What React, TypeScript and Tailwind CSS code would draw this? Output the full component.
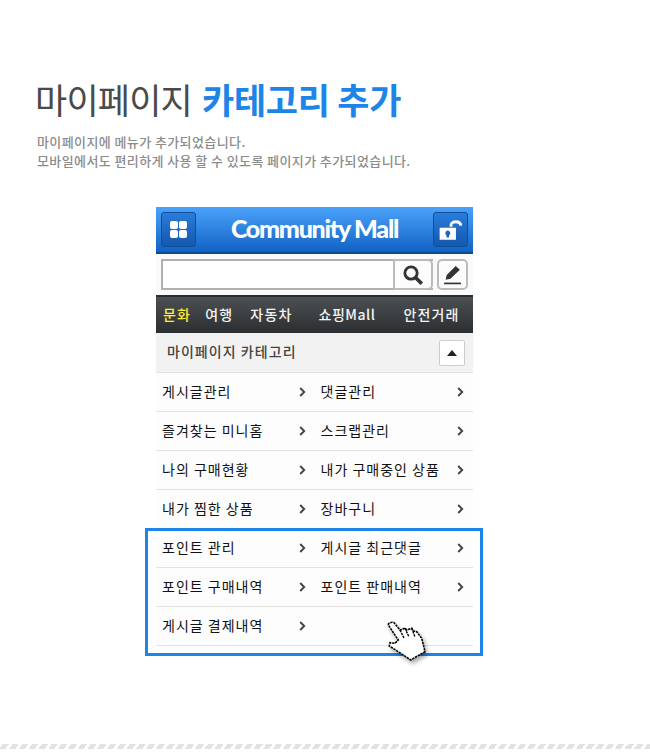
const KR = "font-['Noto_Sans_CJK_KR',sans-serif]";

function Chevron() {
  return (
    <svg width="7" height="10" viewBox="0 0 7 10" className="shrink-0">
      <path d="M1.2 1 L5.2 5 L1.2 9" fill="none" stroke="#444" strokeWidth="1.9" />
    </svg>
  );
}

function Cell({ label }: { label?: string }) {
  return (
    <div className="flex w-[159px] items-center justify-between pr-[9px] pl-[6px]">
      {label ? (
        <>
          <span className="mb-[2px] text-[14px] leading-none tracking-[1px] text-[#111]">{label}</span>
          <Chevron />
        </>
      ) : null}
    </div>
  );
}

const rows: [string, string?][] = [
  ["게시글관리", "댓글관리"],
  ["즐겨찾는 미니홈", "스크랩관리"],
  ["나의 구매현황", "내가 구매중인 상품"],
  ["내가 찜한 상품", "장바구니"],
  ["포인트 관리", "게시글 최근댓글"],
  ["포인트 구매내역", "포인트 판매내역"],
  ["게시글 결제내역"],
];

function Hand() {
  return (
    <svg width="42" height="44" viewBox="0 0 42 44" className="absolute top-[620px] left-[386px] drop-shadow-[2px_3px_2px_rgba(0,0,0,0.35)]">
      <path
        d="M2.3 5 C2 3 6 1.5 8 2.7 L14 10 L19 8.3 L21 10 L25.7 8.3 L27.5 11 L30.7 11.7 L35.7 18.3 L39 31.7 L24.7 40 L12.3 31.7 L3.3 26 L4 22.7 L9 23.3 L12.3 20 Z"
        fill="#fff"
        stroke="#000"
        strokeWidth="1.6"
        strokeDasharray="2.4 0.8"
      />
      <path d="M19 8.3 L23 17 M25.7 8.3 L29 17 M14 10 L18 18" fill="none" stroke="#000" strokeWidth="1.4" strokeDasharray="2.4 0.8" />
    </svg>
  );
}

export default function App() {
  return (
    <div className={`relative h-[752px] w-[650px] overflow-hidden bg-white ${KR}`}>
      <div className="pt-[72px] pl-[37px]">
        <h1 className="-ml-[2px] whitespace-nowrap text-[35px] leading-[54px] tracking-[-0.8px] text-[#4a4a4a] font-normal">
          마이페이지 <span className="ml-[3px] font-bold tracking-[-0.3px] text-[#1e84e8]">카테고리 추가</span>
        </h1>
        <p className="mt-[6px] whitespace-nowrap text-[13px] leading-[19px] font-medium tracking-[0.4px] text-[#8c8c8c]">
          마이페이지에 메뉴가 추가되었습니다.
          <br />
          모바일에서도 편리하게 사용 할 수 있도록 페이지가 추가되었습니다.
        </p>
      </div>

      <div className="mt-[37px] ml-[156px] w-[317px]">
        <header className="flex h-[47px] items-center justify-between border-b-2 border-[#0b4a8f] bg-gradient-to-b from-[#4aa2fb] to-[#0f63c4] px-[5px]">
          <button className="flex h-[35px] w-[35px] items-center justify-center rounded-[3px] border border-[#0f4f99] bg-gradient-to-b from-[#2a7cdc] to-[#1558ab]">
            <span className="grid grid-cols-2 gap-[1px]">
              <i className="h-[8px] w-[8px] rounded-[2px] bg-white" />
              <i className="h-[8px] w-[8px] rounded-[2px] bg-white" />
              <i className="h-[8px] w-[8px] rounded-[2px] bg-white" />
              <i className="h-[8px] w-[8px] rounded-[2px] bg-white" />
            </span>
          </button>
          <span className="mb-[2px] font-['Lato',sans-serif] text-[25px] leading-none font-black tracking-[-1.25px] text-white">Community Mall</span>
          <button className="flex h-[35px] w-[35px] items-center justify-center rounded-[3px] border border-[#0f4f99] bg-gradient-to-b from-[#2a7cdc] to-[#1558ab]">
            <svg width="25" height="24" viewBox="0 0 23 22">
              <path d="M12 8 V6.5 C12 2.5 20.5 2 21 7" fill="none" stroke="#fff" strokeWidth="2.6" />
              <path fillRule="evenodd" fill="#fff" d="M1.5 9 H16.5 V20 H1.5 Z M9 11.5 a2.4 2.4 0 0 0 -1.2 4.4 V18 H10.2 V15.9 A2.4 2.4 0 0 0 9 11.5 Z" />
            </svg>
          </button>
        </header>

        <div className="flex h-[41px] items-center bg-[#fafafa] pr-[5px] pl-[5px]">
          <div className="flex h-[31px] w-[272px] border-2 border-[#b0b0b0] border-r-0 bg-white" />
          <button className="ml-[-40px] flex h-[31px] w-[40px] items-center justify-center rounded-r-[5px] border-2 border-[#bbb] bg-[#fcfcfc]">
            <svg width="22" height="22" viewBox="0 0 20 20">
              <circle cx="8.2" cy="8.2" r="5.6" fill="none" stroke="#333" strokeWidth="2.6" />
              <path d="M12.5 12.5 L18 18" stroke="#333" strokeWidth="3.4" />
            </svg>
          </button>
          <button className="ml-[4px] flex h-[31px] w-[31px] items-center justify-center rounded-[5px] border-2 border-[#bbb] bg-[#fcfcfc]">
            <svg width="19" height="20" viewBox="0 0 18 19">
              <path d="M12 1 L16 4.5 L7 13 L2.5 14 L3.5 9.5 Z" fill="#333" />
              <path d="M1 17.5 H17" stroke="#333" strokeWidth="1.6" />
            </svg>
          </button>
        </div>

        <nav className="flex h-[38px] items-center border-t-2 border-[#2b2e30] bg-gradient-to-b from-[#4d5053] to-[#2c2f31] pb-[3px] text-[14px] leading-none font-medium tracking-[1.2px] text-[#f4f4f4]">
          <span className="ml-[7px] text-[#ffee33]">문화</span>
          <span className="ml-[14px]">여행</span>
          <span className="ml-[17px]">자동차</span>
          <span className="ml-[26px] tracking-[0.5px]">쇼핑Mall</span>
          <span className="ml-[28px]">안전거래</span>
        </nav>

        <div className="flex h-[40px] items-center justify-between border-b border-[#e2e2e2] bg-[#f2f2f2] pr-[8px] pl-[11px]">
          <span className="mb-[3px] text-[14px] leading-none font-medium tracking-[1.05px] text-[#444]">마이페이지 카테고리</span>
          <button className="flex h-[26px] w-[26px] items-center justify-center rounded-[2px] border border-[#ccc] bg-white">
            <svg width="10" height="6" viewBox="0 0 10 6">
              <path d="M5 0 L10 6 H0 Z" fill="#222" />
            </svg>
          </button>
        </div>

        {rows.map(([a, b], i) => (
          <div key={i} className="flex h-[39px] border-b border-[#e2e2e2] bg-[#fdfdfd]">
            <Cell label={a} />
            <Cell label={b} />
          </div>
        ))}
      </div>

      <div className="absolute top-[528px] left-[145px] h-[128px] w-[338px] border-[3px] border-[#1e84e8]" />
      <Hand />

      <div className="absolute bottom-[3px] left-0 h-[5px] w-full bg-[repeating-linear-gradient(-55deg,#e2e2e2_0,#e2e2e2_5px,#ffffff_5px,#ffffff_8px)]" />
    </div>
  );
}
